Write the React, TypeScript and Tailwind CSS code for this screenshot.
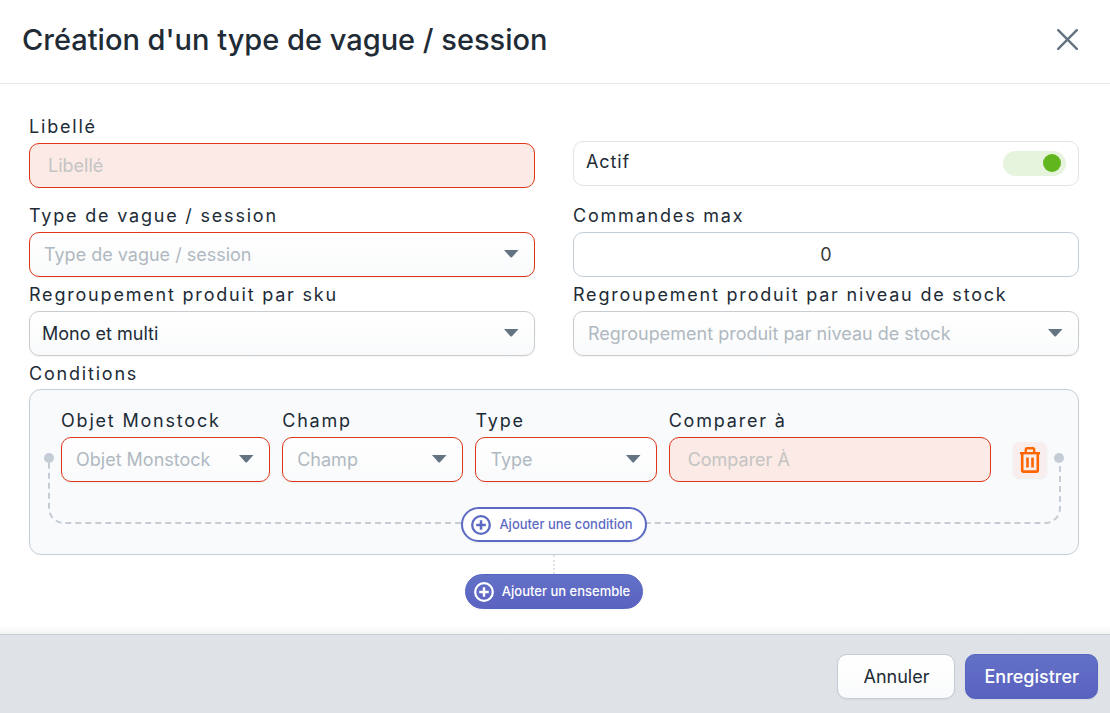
import { useState } from "react";
import type { ReactNode } from "react";
import clsx from "clsx";

const LABEL = "flex h-[34px] items-center pt-0.5 text-lg tracking-widest text-[#212b36]";
const FIELD = "h-[45px] w-full rounded-[10px] border text-lg outline-none";

function Caret() {
  return (
    <svg className="pointer-events-none absolute top-[18px] right-4 h-2 w-4" viewBox="0 0 16 8" aria-hidden="true">
      <path d="M1 0H15.5L9.2 7Q8.2 8 7.2 7Z" fill="#637381" />
    </svg>
  );
}

type SelectFieldProps = {
  id: string;
  label: string;
  options?: string[];
  value?: string;
  error?: boolean;
};

function SelectField({ id, label, options = [], value = "", error = false }: SelectFieldProps) {
  const [selected, setSelected] = useState(value);

  return (
    <div className="min-w-0">
      <label htmlFor={id} className={LABEL}>{label}</label>
      <div className="relative">
        <select
          id={id}
          value={selected}
          onChange={(e) => setSelected(e.target.value)}
          className={clsx(
            FIELD,
            "appearance-none bg-linear-to-b from-white to-[#f9fafb] pr-9 shadow-xs",
            error ? "border-[#de3618]" : "border-[#c9cccf]",
            selected ? "pl-3 text-[#212b36]" : "pl-3.5 text-[#b0b9c1]",
          )}
        >
          <option value="" disabled>{label}</option>
          {options.map((o) => (
            <option key={o} value={o}>{o}</option>
          ))}
        </select>
        <Caret />
      </div>
    </div>
  );
}

function TextField({ id, label, placeholder }: { id: string; label: string; placeholder: string }) {
  return (
    <div className="min-w-0">
      <label htmlFor={id} className={LABEL}>{label}</label>
      <input
        id={id}
        type="text"
        placeholder={placeholder}
        className={clsx(FIELD, "block border-[#de3618] bg-[#fbeae5] px-[18px] text-[#212b36] placeholder:text-[#c4c4c4]")}
      />
    </div>
  );
}

function PlusCircle() {
  return (
    <svg className="size-5 shrink-0" viewBox="0 0 20 20" fill="none" stroke="currentColor" aria-hidden="true">
      <circle cx="10" cy="10" r="8.8" strokeWidth="2.3" />
      <path d="M10 5.2V14.8M5.2 10H14.8" strokeWidth="2.5" />
    </svg>
  );
}

function PillButton({ children, className }: { children: ReactNode; className: string }) {
  return (
    <button
      type="button"
      className={clsx("flex h-[35px] items-center gap-2 rounded-full text-[13px] font-medium shadow-xs", className)}
    >
      <PlusCircle />
      {children}
    </button>
  );
}

export default function App() {
  const [active, setActive] = useState(true);

  return (
    <form
      className="flex min-h-screen flex-col bg-white font-['Inter',sans-serif] text-[#212b36]"
      onSubmit={(e) => e.preventDefault()}
    >
      {/* Header */}
      <header className="flex h-[84px] items-center justify-between border-b border-[#e6e8ea] pr-8 pb-1 pl-[22px]">
        <h1 className="text-[29px] font-medium">Création d'un type de vague / session</h1>
        <button type="button" aria-label="Fermer">
          <svg className="size-[21px]" viewBox="0 0 21 21" fill="none" stroke="#637381" strokeWidth="2.4" strokeLinecap="round">
            <path d="M1.2 1.2L19.8 19.8M19.8 1.2L1.2 19.8" />
          </svg>
        </button>
      </header>

      {/* Fields */}
      <main className="flex-1 pt-[25px] pr-[31px] pb-4 pl-[29px]">
        <div className="grid grid-cols-2 gap-x-[38px]">
          <div className="pb-2.5">
            <TextField id="libelle" label="Libellé" placeholder="Libellé" />
          </div>
          <div className="pt-8">
            <div className="flex h-[45px] items-center justify-between rounded-[10px] border border-[#dfe3e8] px-3">
              <label htmlFor="actif" className="pb-1 text-lg tracking-wider">Actif</label>
              <span className="relative flex h-[25px] w-[63px]">
                <input
                  id="actif"
                  type="checkbox"
                  role="switch"
                  checked={active}
                  onChange={(e) => setActive(e.target.checked)}
                  className="peer size-full cursor-pointer appearance-none rounded-full bg-gray-200 checked:bg-[#e6f3dd]"
                />
                <span className="pointer-events-none absolute top-[3px] left-[5px] size-[18px] rounded-full bg-gray-400 peer-checked:right-[5px] peer-checked:left-auto peer-checked:bg-[#61b61d]" />
              </span>
            </div>
          </div>

          <SelectField id="type-vague" label="Type de vague / session" error />
          <div className="min-w-0">
            <label htmlFor="commandes-max" className={LABEL}>Commandes max</label>
            <input
              id="commandes-max"
              type="text"
              inputMode="numeric"
              defaultValue="0"
              className={clsx(FIELD, "block border-[#c4cdd5] bg-white text-center text-[#3b3b3b]")}
            />
          </div>

          <SelectField
            id="regroupement-sku"
            label="Regroupement produit par sku"
            value="Mono et multi"
            options={["Mono et multi", "Mono", "Multi"]}
          />
          <SelectField id="regroupement-stock" label="Regroupement produit par niveau de stock" />
        </div>

        {/* Conditions */}
        <h2 className="flex h-[33px] items-center pt-0.5 text-lg tracking-widest">Conditions</h2>
        <section className="relative rounded-xl border border-[#c4cdd5] bg-[#f8fafc] px-[31px] pt-[13px] pb-3">
          <div className="absolute top-[68px] right-[17px] bottom-[30px] left-[18px] rounded-b-2xl border-2 border-t-0 border-dashed border-[#c4cdd5]" />
          <span className="absolute top-[63px] left-3.5 size-2.5 rounded-full bg-[#c4cdd5]" />
          <span className="absolute top-[63px] right-3.5 size-2.5 rounded-full bg-[#c4cdd5]" />

          <div className="relative flex items-end gap-[22px]">
            <div className="grid flex-1 grid-cols-[209fr_181fr_181fr_322fr] gap-x-3">
              <SelectField id="objet" label="Objet Monstock" error />
              <SelectField id="champ" label="Champ" error />
              <SelectField id="type" label="Type" error />
              <TextField id="comparer" label="Comparer à" placeholder="Comparer À" />
            </div>
            <button
              type="button"
              aria-label="Supprimer la condition"
              className="mb-1 flex h-9 w-[34px] items-center justify-center rounded-md bg-[#f9eeee] shadow-xs"
            >
              <svg className="h-[26px] w-5" viewBox="0 0 20 26" fill="none" stroke="#ff6600" aria-hidden="true">
                <path d="M0 6.2H20" strokeWidth="2.4" />
                <path d="M5.8 6V2.6Q5.8 1.3 7.1 1.3H12.9Q14.2 1.3 14.2 2.6V6" strokeWidth="2.4" />
                <path d="M2.2 6.5V23.2Q2.2 24.6 3.6 24.6H16.4Q17.8 24.6 17.8 23.2V6.5" strokeWidth="2.6" />
                <path d="M7.5 10.5V20.5M12.5 10.5V20.5" strokeWidth="2.6" />
              </svg>
            </button>
          </div>

          <div className="relative mt-[25px] flex justify-center">
            <PillButton className="border-2 border-[#5c6ac4] bg-white pr-3 pl-2 text-[#5c6ac4]">
              Ajouter une condition
            </PillButton>
          </div>
        </section>

        <div className="flex flex-col items-center">
          <div className="h-[19px] border-l-2 border-dotted border-[#dfe3e8]" />
          <PillButton className="border border-[#5563c1] bg-linear-to-b from-[#6371c7] to-[#5a62c0] pr-3 pl-2 text-white">
            Ajouter un ensemble
          </PillButton>
        </div>
      </main>

      {/* Footer */}
      <div className="h-[9px] bg-linear-to-b from-white to-[#f4f4f4]" />
      <footer className="flex justify-end gap-2.5 border-t border-[#c4cdd5] bg-[#dfe3e8] pt-[19px] pr-3 pb-3.5">
        <button
          type="button"
          className="h-[45px] rounded-[10px] border border-[#c4cdd5] bg-linear-to-b from-white to-[#f9fafb] px-[25px] text-lg shadow-xs"
        >
          Annuler
        </button>
        <button
          type="submit"
          className="h-[45px] rounded-[10px] border border-[#5563c1] bg-linear-to-b from-[#6371c7] to-[#5a62c0] px-[18px] text-lg font-medium text-white shadow-xs"
        >
          Enregistrer
        </button>
      </footer>
    </form>
  );
}
